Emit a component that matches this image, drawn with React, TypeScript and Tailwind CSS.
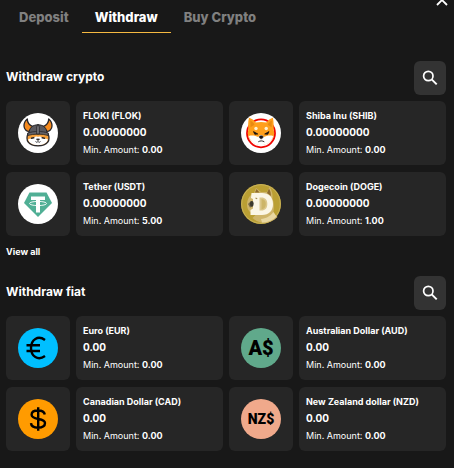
import { useState, type ReactNode } from "react";

type Currency = {
  name: string;
  balance: string;
  min: string;
  icon: ReactNode;
};

const FlokiIcon = () => (
  <svg viewBox="0 0 40 40" className="w-10 h-10" aria-hidden="true">
    <circle cx="20" cy="20" r="20" fill="#fff" />
    <path
      d="M10 20.500c-1 2.500-1.800 6 .2 8.500 2.200 2.800 6 3.800 9.800 3.800s7.600-1 9.800-3.800c2-2.500 1.200-6 .2-8.500z"
      fill="#f7a13a"
      stroke="#29272b"
      strokeWidth="1.300"
    />
    <path
      d="M20 24c-1.500-.8-3-.6-4.200.6-1.600 1.200-3.800 1-5.600 1.600.3 3.500 4.600 5.900 9.800 5.900s9.500-2.400 9.800-5.900c-1.800-.6-4-.4-5.600-1.600-1.200-1.200-2.700-1.400-4.200-.6z"
      fill="#fff"
    />
    <path
      d="M11.500 18.300c-3 .2-5.400-2-5.500-5.300 0-3 1.300-5.500 3.300-7 0 3.500 1.700 6.200 5.700 7.600zM28.500 18.300c3 .2 5.400-2 5.500-5.300 0-3-1.300-5.500-3.300-7 0 3.500-1.700 6.200-5.700 7.600z"
      fill="#f68b1f"
      stroke="#29272b"
      strokeWidth="1.300"
      strokeLinejoin="round"
    />
    <path d="M11 20.500c0-5.500 3.600-8.700 9-8.700s9 3.200 9 8.700c-6-1.600-12-1.600-18 0z" fill="#5a595f" stroke="#242326" strokeWidth="1" />
    <path d="M9.800 20c6-2 14.400-2 20.400 0v2.500c-6-1.900-14.400-1.900-20.400 0z" fill="#65646a" stroke="#242326" strokeWidth=".8" />
    <path d="M20 11l1.300 3v7h-2.600v-7z" fill="#77767b" stroke="#242326" strokeWidth=".8" />
    <path d="M13.500 25.200l2.300-.4M26.500 25.200l-2.300-.4" stroke="#29272b" strokeWidth="1.500" strokeLinecap="round" />
    <path d="M18.500 26h3L20 27.600z" fill="#29272b" stroke="#29272b" strokeWidth=".8" />
    <path d="M17.500 28.500c.8 1 2 1 2.500 0 .5 1 1.700 1 2.500 0" fill="none" stroke="#29272b" strokeWidth=".9" />
  </svg>
);

const ShibaIcon = () => (
  <svg viewBox="0 0 40 40" className="w-10 h-10" aria-hidden="true">
    <circle cx="20" cy="20" r="20" fill="#fff" />
    <circle cx="20" cy="20.300" r="14" fill="#fff" stroke="#f00500" strokeWidth="1.800" />
    <path d="M8 4.800c2.500.6 5.200 2.600 6.800 4.800 3.300-.9 7.300-.9 10.600 0 1.600-2.200 4-4.200 6.500-4.800 1 4.500.6 8.500.8 12.200 1.300 5-.3 9-3.500 11.500-2.500 2-6 3.500-9.200 3.500s-6.500-1.500-9-3.500C7.800 26 6 22 7.300 17c0-4-.5-7.700.7-12.200z" fill="#ff9f1c" />
    <path d="M9.300 7.500c1.700.7 3.200 2.300 4.200 4.200l-4 2.500zM30.800 7.500c-1.700.7-3.200 2.300-4.200 4.200l4 2.500z" fill="#e88a13" />
    <path d="M7.800 23c3.500-1 7-.3 9.400 1 .8-1.300 1.800-2 2.800-2s2 .7 2.800 2c2.400-1.300 5.900-2 9.400-1-1 5.500-6.700 9.200-12.200 9.200S9 28.500 7.800 23z" fill="#fff" />
    <circle cx="15" cy="15.500" r="1.700" fill="#fff2d4" />
    <circle cx="25.200" cy="15.500" r="1.700" fill="#fff2d4" />
    <path d="M12.500 18.600l4.300 2.400-3 .3zM28 18.600L23.700 21l3 .3z" fill="#181111" stroke="#181111" strokeWidth=".8" />
    <path d="M18.300 23.500c.7-1 3.100-1 3.800 0 .2 1.200-1 2.300-1.900 2.300s-2.100-1.100-1.900-2.300z" fill="#181111" stroke="#181111" strokeWidth=".6" />
    <path d="M17.300 28.800c1.800-1.200 4.200-1.200 6 0" fill="none" stroke="#181111" strokeWidth=".9" />
  </svg>
);

const TetherIcon = () => (
  <svg viewBox="0 0 40 40" className="w-10 h-10" aria-hidden="true">
    <circle cx="20" cy="20" r="20" fill="#fff" />
    <path d="M11.500 8.500h17L34 19 20 33 6 19z" fill="#50af95" />
    <path d="M13 12.500h14V16h-5v12.500h-4V16h-5z" fill="#fff" />
    <ellipse cx="20" cy="19.500" rx="8.500" ry="2.100" fill="none" stroke="#fff" strokeWidth=".9" />
  </svg>
);

const DogeIcon = () => (
  <svg viewBox="0 0 40 40" className="w-10 h-10" aria-hidden="true">
    <circle cx="20" cy="20" r="20" fill="#ba9f33" />
    <circle cx="20" cy="20" r="19.300" fill="none" stroke="#c9b35b" strokeWidth="1" />
    <path d="M6 21c0-5 2-9.500 7-12l2-5 5 4h6l2.500-5c2.500 3 3.500 8 3 12 2.500 5 1 11 1 14l4 4c-4 4-9 6-15 6-4-1-8-3-10-5l4-4c-6 0-9.500-4-9.500-9z" fill="#cfb56a" />
    <path d="M14 8.500l1.500-3.500 3 3.500zM26 9l2-4.500c1.500 2.500 2 5 1.900 7.500z" fill="#8e6b2d" />
    <path d="M20 35c5-.5 9-2.500 12.500-7l3 4.500c-4 4-9 6-14.500 6z" fill="#e8d7a2" />
    <path d="M10.500 9H21c7 0 11 4.300 11 11s-4 11-11 11H9.500v-5l2.500-1.500V15l-2-1z" fill="#fbf6e5" />
    <path d="M18.500 13.500h1.800c4 0 6 2.300 6 6.500s-2 6.500-6 6.500h-1.800z" fill="#dcc88c" />
    <path d="M20.500 15c3 .5 4.300 2 4.300 5s-1.500 5-4.300 5.500z" fill="#cdb568" />
    <path d="M7 20l3-3 2 .5v5L9 23.500z" fill="#756849" />
    <ellipse cx="10.800" cy="19.800" rx="1.900" ry="2.700" fill="#3b392d" />
    <path d="M14.500 14l1.700.8" stroke="#a08a50" strokeWidth="1.200" />
  </svg>
);

const EuroIcon = () => (
  <svg viewBox="0 0 40 40" className="w-10 h-10" aria-hidden="true">
    <circle cx="20" cy="20" r="20" fill="#00bfff" />
    <path d="M27 12C20 7 13 11.500 13 20s7 13 14 8M8.500 17.300h13.500M8.500 23h13.500" fill="none" stroke="#000" strokeWidth="2.400" />
  </svg>
);

const DollarIcon = () => (
  <svg viewBox="0 0 40 40" className="w-10 h-10" aria-hidden="true">
    <circle cx="20" cy="20" r="20" fill="#ff9b00" />
    <path
      d="M26.800 15.500c-.5-2.600-3-4-6.700-4-4 0-6.500 1.500-6.500 4.200 0 6 13.400 2.500 13.400 8.400 0 3-2.800 4.600-6.900 4.600-4.300 0-6.900-1.900-7.100-4.600M20.200 8.200v23.600"
      fill="none"
      stroke="#000"
      strokeWidth="2.400"
    />
  </svg>
);

const crypto: Currency[] = [
  { name: "FLOKI (FLOK)", balance: "0.00000000", min: "0.00", icon: <FlokiIcon /> },
  { name: "Shiba Inu (SHIB)", balance: "0.00000000", min: "0.00", icon: <ShibaIcon /> },
  { name: "Tether (USDT)", balance: "0.00000000", min: "5.00", icon: <TetherIcon /> },
  { name: "Dogecoin (DOGE)", balance: "0.00000000", min: "1.00", icon: <DogeIcon /> },
];

const fiat: Currency[] = [
  { name: "Euro (EUR)", balance: "0.00", min: "0.00", icon: <EuroIcon /> },
  {
    name: "Australian Dollar (AUD)",
    balance: "0.00",
    min: "0.00",
    icon: (
      <span className="w-10 h-10 rounded-full bg-[#60a98b] text-black flex items-center justify-center font-['Roboto',sans-serif] text-[20px] font-black">
        A$
      </span>
    ),
  },
  { name: "Canadian Dollar (CAD)", balance: "0.00", min: "0.00", icon: <DollarIcon /> },
  {
    name: "New Zealand dollar (NZD)",
    balance: "0.00",
    min: "0.00",
    icon: (
      <span className="w-10 h-10 rounded-full bg-[#f0a98b] text-black flex items-center justify-center font-['Roboto',sans-serif] text-[14px] font-black">
        NZ$
      </span>
    ),
  },
];

const tabs = ["Deposit", "Withdraw", "Buy Crypto"];

function CurrencyCard({ item }: { item: Currency }) {
  return (
    <li className="flex gap-1.5 min-w-0">
      <div className="w-16 h-16 shrink-0 rounded-md bg-[#262626] flex items-center justify-center">
        {item.icon}
      </div>
      <div className="flex-1 min-w-0 h-16 rounded-md bg-[#262626] px-[7px] pt-1.5 leading-[17px] whitespace-nowrap">
        <h3 className="text-[9px] font-bold">{item.name}</h3>
        <p className="text-[10px] font-bold">{item.balance}</p>
        <p className="text-[9px]">
          Min. Amount: <span className="font-bold">{item.min}</span>
        </p>
      </div>
    </li>
  );
}

function CurrencySection({ title, items }: { title: string; items: Currency[] }) {
  return (
    <section>
      <div className="flex items-start justify-between mb-1.5">
        <h2 className="text-[12px] leading-8 font-bold">{title}</h2>
        <button
          aria-label={`Search: ${title}`}
          className="w-8 h-[34px] rounded-md bg-[#333333] hover:bg-[#404040] flex items-center justify-center"
        >
          <svg viewBox="0 0 16 16" className="w-4 h-4" fill="none" stroke="#fff" aria-hidden="true">
            <circle cx="6.300" cy="6" r="4.700" strokeWidth="1.700" />
            <path d="M9.700 9.400l5 5" strokeWidth="2" />
          </svg>
        </button>
      </div>
      <ul className="grid grid-cols-2 gap-x-1.5 gap-y-[7px]">
        {items.map((item) => (
          <CurrencyCard key={item.name} item={item} />
        ))}
      </ul>
    </section>
  );
}

export default function App() {
  const [active, setActive] = useState("Withdraw");

  return (
    <main className="min-h-screen bg-[#181818] text-white pl-1.5 pr-2 pb-4 font-['Inter','Liberation_Sans',sans-serif]">
      <header className="flex justify-between items-start mb-7">
        <nav className="flex">
          {tabs.map((tab) => (
            <button
              key={tab}
              onClick={() => setActive(tab)}
              className={`h-[33px] px-[13px] pt-1 text-[13px] font-extrabold border-b ${
                active === tab ? "text-white border-[#f5b941]" : "text-[#808080] border-transparent"
              }`}
            >
              {tab}
            </button>
          ))}
        </nav>
        <button aria-label="Close" className="w-3 h-1.5 overflow-hidden flex items-end -mr-0.5">
          <svg viewBox="0 0 12 12" className="w-3 h-3 shrink-0" fill="none" stroke="#fff" strokeWidth="1.800" aria-hidden="true">
            <path d="M1 1l10 10M11 1L1 11" />
          </svg>
        </button>
      </header>

      <CurrencySection title="Withdraw crypto" items={crypto} />
      <a href="#" className="block w-fit mt-2 mb-4 text-[9px] leading-4 font-bold">
        View all
      </a>
      <CurrencySection title="Withdraw fiat" items={fiat} />
    </main>
  );
}
